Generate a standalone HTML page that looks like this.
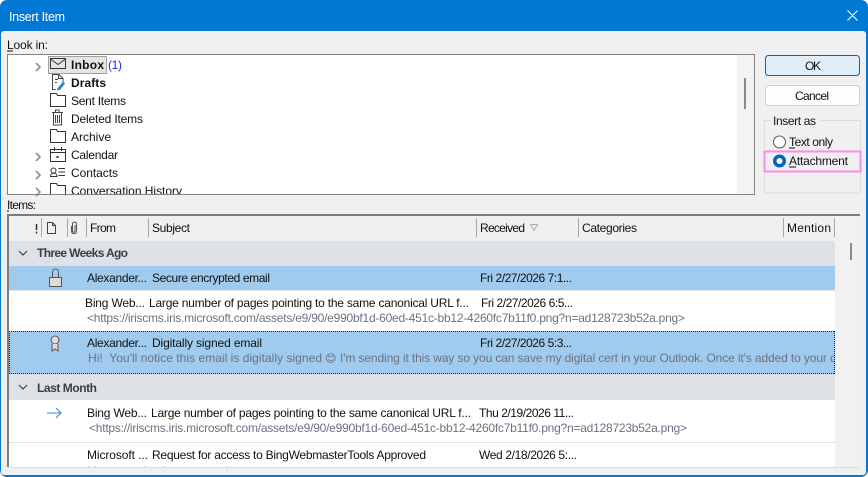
<!DOCTYPE html>
<html><head><meta charset="utf-8"><style>
html,body{margin:0;padding:0;background:#fff;overflow:hidden}
svg{display:block}
text{font-family:"Liberation Sans","DejaVu Sans",sans-serif;font-size:12px;fill:#111;white-space:pre}
.g{fill:#6b7280}
.b{font-weight:bold}
.gh{font-weight:bold;fill:#3a3f46}
</style></head><body>
<svg width="868" height="477" viewBox="0 0 868 477" xmlns="http://www.w3.org/2000/svg">
<rect x="0" y="0" width="868" height="477" rx="7" fill="#0078d4"/>
<rect x="1" y="31" width="865" height="444" rx="3" fill="#f0f0f0"/>
<text x="9" y="21" style="fill:#fff;font-size:12.5px" textLength="56">Insert Item</text>
<path d="M847.500 10.500l10 10M857.500 10.500l-10 10" stroke="#fff" stroke-width="1" fill="none"/>

<text x="7" y="49" textLength="41">Look in:</text><path d="M7 51h6" stroke="#111"/>
<rect x="7.500" y="54.500" width="747" height="140" fill="#fff" stroke="#828282"/>
<rect x="737" y="55" width="17" height="139" fill="#f3f3f3"/>
<rect x="744" y="78" width="2" height="31" fill="#8a8a8a"/>

<g fill="none" stroke="#8f8f8f" stroke-width="1.600">
<path d="M36 63l4 4-4 4M36 153l4 4-4 4M36 171l4 4-4 4M36 188l4 4-4 4"/>
</g>
<rect x="48.500" y="56.500" width="58" height="17" fill="#e5e5e5" stroke="#a0a0a0"/>
<g fill="none" stroke="#333" stroke-width="1">
<path d="M50.500 58.500h15v10h-15zM50.500 59l7.500 5.500 7.500-5.500"/>
<path d="M55.500 89.500h-3v-15h6.500l4 4v4M58.500 74.500v4h4M55 79.500h3M55 82.500h2" stroke="#444"/>
<path d="M50.500 106.500v-13h6l1 2h8v11z"/>
<path d="M50.500 142.500v-13h6l1 2h8v11z"/>
<path d="M53.500 112.500h8v12.500h-8zM52 112.500h11M55.500 112v-2h3.500v2M55.500 115v8M57.500 115v8M59.500 115v8" stroke="#444"/>
<path d="M50.500 149.500h15v12h-15zM50.500 152.500h15M54.500 147v4M61.500 147v4"/>
<circle cx="53.500" cy="170.500" r="2.500"/><path d="M50.500 176.500c0-4.500 6.500-4.500 6.500 0z"/>
<path d="M58.500 168.500h6.500M58.500 172h6.500M58.500 175.500h6.500"/>
<path d="M50.500 195v-11.500h6l1 2h8v10"/>
</g>
<path d="M58.500 89.500l5.500-7" stroke="#2b88d8" stroke-width="3" fill="none"/>
<path d="M57 91l.5-3 2 1.500z" fill="#2b88d8"/>
<rect x="56.500" y="156" width="2" height="2" fill="#333"/>
<text x="71" y="69" class="b" textLength="33">Inbox</text>
<text x="108" y="69" style="fill:#2222ee" textLength="14">(1)</text>
<text x="71" y="87" class="b" textLength="35">Drafts</text>
<text x="71" y="105" textLength="55">Sent Items</text>
<text x="71" y="123" textLength="72">Deleted Items</text>
<text x="71" y="141" textLength="40">Archive</text>
<text x="71" y="159" textLength="47">Calendar</text>
<text x="71" y="177" textLength="47">Contacts</text>
<svg x="7" y="55" width="730" height="139" viewBox="7 55 730 139"><text x="71" y="195" textLength="111">Conversation History</text></svg>
<rect x="8" y="194" width="746" height="1" fill="#828282"/>

<rect x="765.500" y="55.500" width="94" height="20" rx="3" fill="#e0eef9" stroke="#0067c0"/>
<text x="805" y="70" textLength="16">OK</text>
<rect x="765.500" y="85.500" width="94" height="20" rx="3" fill="#fdfdfd" stroke="#d0d0d0"/>
<text x="795" y="100" textLength="34">Cancel</text>
<rect x="764.500" y="120.500" width="96" height="72.500" fill="none" stroke="#dcdcdc"/>
<rect x="771" y="115" width="49" height="12" fill="#f0f0f0"/>
<text x="773" y="125" textLength="43">Insert as</text>
<circle cx="779.500" cy="142" r="6" fill="#fff" stroke="#555"/>
<text x="789" y="146" textLength="44">Text only</text><path d="M789 148h6" stroke="#111"/>
<rect x="764.500" y="151.500" width="96" height="20" fill="none" stroke="#ff88ee" stroke-width="2"/>
<circle cx="779.500" cy="161" r="6.500" fill="#0067c0"/>
<circle cx="779.500" cy="161" r="3" fill="#fff"/>
<text x="789" y="165" textLength="59">Attachment</text><path d="M789 167h7" stroke="#111"/>

<text x="7" y="209" textLength="29">Items:</text><path d="M7 211h2" stroke="#111"/>
<rect x="7" y="214" width="853" height="2" fill="#7c7c7c"/>
<rect x="7" y="214" width="2" height="253" fill="#7c7c7c"/>
<rect x="9" y="216" width="850" height="251" fill="#fff"/>
<rect x="835" y="216" width="24" height="251" fill="#f1f1f1"/>
<rect x="850" y="243" width="2" height="17" fill="#8a8a8a"/>
<rect x="9" y="216" width="826" height="25" fill="#f0f0f0"/>
<g fill="#a8a8a8">
<rect x="41" y="218" width="1" height="19"/><rect x="67" y="218" width="1" height="19"/><rect x="86" y="218" width="1" height="19"/><rect x="148" y="218" width="1" height="19"/><rect x="476" y="218" width="1" height="19"/><rect x="578" y="218" width="1" height="19"/><rect x="783" y="218" width="1" height="19"/><rect x="834" y="218" width="1" height="19"/>
</g>
<path d="M36.500 224v6M36.500 231.500v2" stroke="#333" stroke-width="1.500"/>
<path d="M47.500 233.500v-11h5l3 3v8zM52.500 222.500v3h3" fill="none" stroke="#444"/>
<path d="M71.500 226v5c0 3.500 5 3.500 5 0v-7c0-2.500-4-2.500-4 0v7c0 1.500 2.500 1.500 2.500 0v-6" fill="none" stroke="#555"/>
<text x="90" y="232" textLength="26">From</text>
<text x="152" y="232" textLength="38">Subject</text>
<text x="480" y="232" textLength="45">Received</text>
<path d="M530.500 224.500h7l-3.500 6z" fill="none" stroke="#aaa"/>
<text x="582" y="232" textLength="55">Categories</text>
<text x="787" y="232" textLength="44">Mention</text>

<rect x="9" y="241" width="826" height="25" fill="#dee1e6"/>
<path d="M19 251l4 4 4-4" fill="none" stroke="#444" stroke-width="1.200"/>
<text x="37" y="257" class="gh" textLength="91">Three Weeks Ago</text>

<rect x="9" y="266" width="826" height="24" fill="#a0cbee"/>
<rect x="49.500" y="277.500" width="12" height="9" fill="#dcdcdc" stroke="#555"/>
<path d="M52.500 277v-5c0-4 6-4 6 0v5" fill="none" stroke="#555"/>
<text x="87" y="282" textLength="60">Alexander...</text>
<text x="152" y="282" textLength="118">Secure encrypted email</text>
<text x="480" y="282" textLength="92">Fri 2/27/2026 7:1...</text>

<rect x="9" y="290" width="826" height="1" fill="#e6e6e6"/>
<text x="85" y="307" textLength="60">Bing Web...</text>
<text x="149" y="307" textLength="320">Large number of pages pointing to the same canonical URL f...</text>
<text x="481" y="307" textLength="92">Fri 2/27/2026 6:5...</text>
<text x="87" y="322" class="g" textLength="598">&lt;https://iriscms.iris.microsoft.com/assets/e9/90/e990bf1d-60ed-451c-bb12-4260fc7b11f0.png?n=ad128723b52a.png&gt;</text>

<rect x="9" y="331" width="826" height="43" fill="#a0cbee"/>
<path d="M9 331.500h826M9 373.500h826M9.500 331v43M834.500 331v43" fill="none" stroke="#222" stroke-dasharray="1 1" shape-rendering="crispEdges"/>
<circle cx="55" cy="340" r="4" fill="#dcdcdc" stroke="#555"/>
<path d="M52 344v7l3-2 3 2v-7" fill="#dcdcdc" stroke="#555"/>
<text x="87" y="347" textLength="60">Alexander...</text>
<text x="152" y="347" textLength="110">Digitally signed email</text>
<text x="480" y="347" textLength="92">Fri 2/27/2026 5:3...</text>
<svg x="9" y="350" width="825" height="20" viewBox="9 350 825 20"><text x="88" y="362" class="g" textLength="234">Hi!  You'll notice this email is digitally signed</text><text x="325" y="362" style="font-size:11px;fill:#5f6670">😊</text><text x="340" y="362" class="g" textLength="496">I'm sending it this way so you can save my digital cert in your Outlook. Once it's added to your c</text></svg>

<rect x="9" y="374" width="826" height="26" fill="#dee1e6"/>
<path d="M19 385l4 4 4-4" fill="none" stroke="#444" stroke-width="1.200"/>
<text x="37" y="392" class="gh" textLength="60">Last Month</text>

<path d="M47 413h14M56 408l5 5-5 5" fill="none" stroke="#2b88d8"/>
<text x="87" y="417" textLength="60">Bing Web...</text>
<text x="151" y="417" textLength="320">Large number of pages pointing to the same canonical URL f...</text>
<text x="479" y="417" textLength="95">Thu 2/19/2026 11...</text>
<text x="89" y="432" class="g" textLength="598">&lt;https://iriscms.iris.microsoft.com/assets/e9/90/e990bf1d-60ed-451c-bb12-4260fc7b11f0.png?n=ad128723b52a.png&gt;</text>
<rect x="9" y="442" width="826" height="1" fill="#e3e3e3"/>
<text x="87" y="459" textLength="61">Microsoft ...</text>
<text x="152" y="459" textLength="274">Request for access to BingWebmasterTools Approved</text>
<text x="479" y="459" textLength="98">Wed 2/18/2026 5:...</text>
<svg x="9" y="460" width="826" height="7" viewBox="9 460 826 7"><text x="88" y="475" class="g" textLength="140">Your request has been approved</text></svg>
<rect x="7" y="467" width="853" height="1" fill="#dcdcdc"/>
</svg>
</body></html>
